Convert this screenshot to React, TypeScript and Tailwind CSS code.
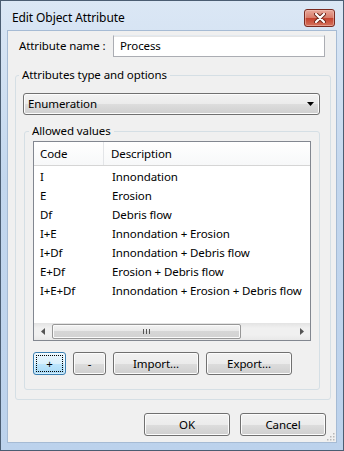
import clsx from 'clsx'

const rows = [
  ['I', 'Innondation'],
  ['E', 'Erosion'],
  ['Df', 'Debris flow'],
  ['I+E', 'Innondation + Erosion'],
  ['I+Df', 'Innondation + Debris flow'],
  ['E+Df', 'Erosion + Debris flow'],
  ['I+E+Df', 'Innondation + Erosion + Debris flow'],
]

function Btn({
  children,
  className,
  focused,
}: {
  children: React.ReactNode
  className?: string
  focused?: boolean
}) {
  return (
    <button
      className={clsx(
        'h-[23px] rounded-[3px] border text-black flex items-center justify-center',
        focused
          ? 'border-[#3c7fb1] bg-[linear-gradient(to_bottom,#eaf6fd_0%,#d9f0fc_50%,#bee6fd_50%,#a7d9f5_100%)] shadow-[inset_0_0_0_1px_#ffffff80]'
          : 'border-[#707070] bg-[linear-gradient(to_bottom,#f2f2f2_0%,#ebebeb_50%,#dddddd_50%,#cfcfcf_100%)] shadow-[inset_0_0_0_1px_#fcfcfc]',
        className
      )}
    >
      {focused ? (
        <span className="flex h-[17px] w-[27px] items-center justify-center border border-dotted border-black">
          {children}
        </span>
      ) : (
        children
      )}
    </button>
  )
}

function Arrow({ dir }: { dir: 'left' | 'right' }) {
  return (
    <div className="flex w-[17px] items-center justify-center">
      <svg width="4" height="7" viewBox="0 0 4 7">
        {dir === 'left' ? (
          <path d="M4 0 L0 3.5 L4 7 Z" fill="#555" />
        ) : (
          <path d="M0 0 L4 3.5 L0 7 Z" fill="#555" />
        )}
      </svg>
    </div>
  )
}

export default function App() {
  return (
    <div className="flex h-[451px] w-[344px] flex-col border border-[#4b5d72] bg-[linear-gradient(to_bottom,#dbe7f5,#c3d7ee_40%,#bcd2ec)] font-['Noto_Sans',sans-serif] text-[11.5px] tracking-[-0.1px] text-black">
      {/* Title bar */}
      <div className="flex h-[29px] shrink-0 items-center justify-between pl-[11px] pr-[8px]">
        <span className="pt-[5px] text-[12px]">Edit Object Attribute</span>
        <div className="mt-[4px] flex h-[18px] w-[31px] items-center justify-center rounded-[3px] border border-[#7a2a20] bg-[linear-gradient(to_bottom,#e9a99b_0%,#d77a68_50%,#c4402c_50%,#d5735d_100%)] shadow-[inset_0_0_0_1px_#f3c8be80]">
          <svg width="12" height="10" viewBox="0 0 12 10">
            <path d="M2 1 L10 9 M10 1 L2 9" stroke="#6b2418" strokeWidth="4" strokeLinecap="round" />
            <path d="M2 1 L10 9 M10 1 L2 9" stroke="#ffffff" strokeWidth="2.2" strokeLinecap="round" />
          </svg>
        </div>
      </div>

      {/* Client area */}
      <div className="relative mx-[6px] mb-[7px] flex flex-1 flex-col border border-[#a6bbd4] bg-[#f0f0f0]">
        <div className="mt-[4px] flex items-center">
          <span className="ml-[11px] w-[94px]">Attribute name :</span>
          <div className="flex h-[22px] w-[212px] items-center border border-[#abadb3] border-t-[#e3e9ef] bg-white pl-[6px] shadow-[inset_0_1px_0_#e5e5e5]">
            Process
          </div>
        </div>

        {/* Outer group */}
        <fieldset className="ml-[7px] mt-[10px] w-[316px] rounded-[3px] border border-[#d5dfe5] px-[7px] pb-[9px]">
          <legend className="ml-[-4px] px-[3px] leading-[16px]">Attributes type and options</legend>

          <div className="mt-[10px] flex h-[22px] w-[297px] items-center justify-between rounded-[3px] border border-[#707070] bg-[linear-gradient(to_bottom,#f2f2f2_0%,#ebebeb_50%,#dddddd_50%,#cfcfcf_100%)] pl-[4px] pr-[5px] shadow-[inset_0_0_0_1px_#fcfcfc]">
            <span>Enumeration</span>
            <svg width="7" height="4" viewBox="0 0 7 4">
              <path d="M0 0 L7 0 L3.5 4 Z" fill="#000" />
            </svg>
          </div>

          {/* Inner group */}
          <fieldset className="ml-[1px] mt-[8px] w-[296px] rounded-[3px] border border-[#d5dfe5] px-[8px] pb-[14px]">
            <legend className="ml-[-4px] px-[3px] leading-[16px]">Allowed values</legend>

            <div className="mt-[2px] flex h-[200px] w-[278px] flex-col border border-[#828790] bg-white">
              <div className="flex h-[24px] shrink-0 items-center border-b border-[#d5d5d5] bg-[linear-gradient(to_bottom,#ffffff,#f7f8f9)]">
                <div className="flex h-full w-[70px] items-center border-r border-[#e3e5e8] pl-[6px]">Code</div>
                <div className="pl-[7px]">Description</div>
              </div>
              <div className="flex flex-1 flex-col pt-[1px]">
                {rows.map(([code, desc]) => (
                  <div key={code} className="flex h-[19px] items-center">
                    <span className="w-[71px] pl-[6px]">{code}</span>
                    <span className="whitespace-nowrap pl-[7px]">{desc}</span>
                  </div>
                ))}
              </div>
              <div className="flex h-[17px] shrink-0 bg-[linear-gradient(to_bottom,#e3e3e3,#f0f0f0_30%,#f0f0f0_70%,#e8e8e8)]">
                <Arrow dir="left" />
                <div className="flex flex-1 items-center pl-[1px]">
                  <div className="flex h-[15px] w-[189px] items-center justify-center rounded-[2px] border border-[#979797] bg-[linear-gradient(to_bottom,#f3f3f3,#e8e8e8_50%,#d6d6d6_50%,#d2d2d2)] shadow-[inset_0_0_0_1px_#fafafa]">
                    <div className="flex gap-[2px]">
                      <span className="h-[5px] w-[1px] bg-[#555]" />
                      <span className="h-[5px] w-[1px] bg-[#555]" />
                      <span className="h-[5px] w-[1px] bg-[#555]" />
                    </div>
                  </div>
                </div>
                <Arrow dir="right" />
              </div>
            </div>

            <div className="mt-[11px] flex">
              <Btn focused className="w-[33px]">+</Btn>
              <Btn className="ml-[7px] w-[33px]">-</Btn>
              <Btn className="ml-[7px] w-[86px]">Import...</Btn>
              <Btn className="ml-[7px] w-[86px]">Export...</Btn>
            </div>
          </fieldset>
        </fieldset>

        <div className="mt-[13px] flex justify-end pr-[10px]">
          <Btn className="w-[86px]">OK</Btn>
          <Btn className="ml-[10px] w-[86px]">Cancel</Btn>
        </div>

        {/* Resize grip */}
        <svg className="absolute bottom-[1px] right-[1px]" width="10" height="10" viewBox="0 0 10 10">
          {[
            [8, 2],
            [5, 5],
            [8, 5],
            [2, 8],
            [5, 8],
            [8, 8],
          ].map(([x, y]) => (
            <rect key={`${x}-${y}`} x={x} y={y} width="1.5" height="1.5" fill="#b8b8b8" />
          ))}
        </svg>
      </div>
    </div>
  )
}
